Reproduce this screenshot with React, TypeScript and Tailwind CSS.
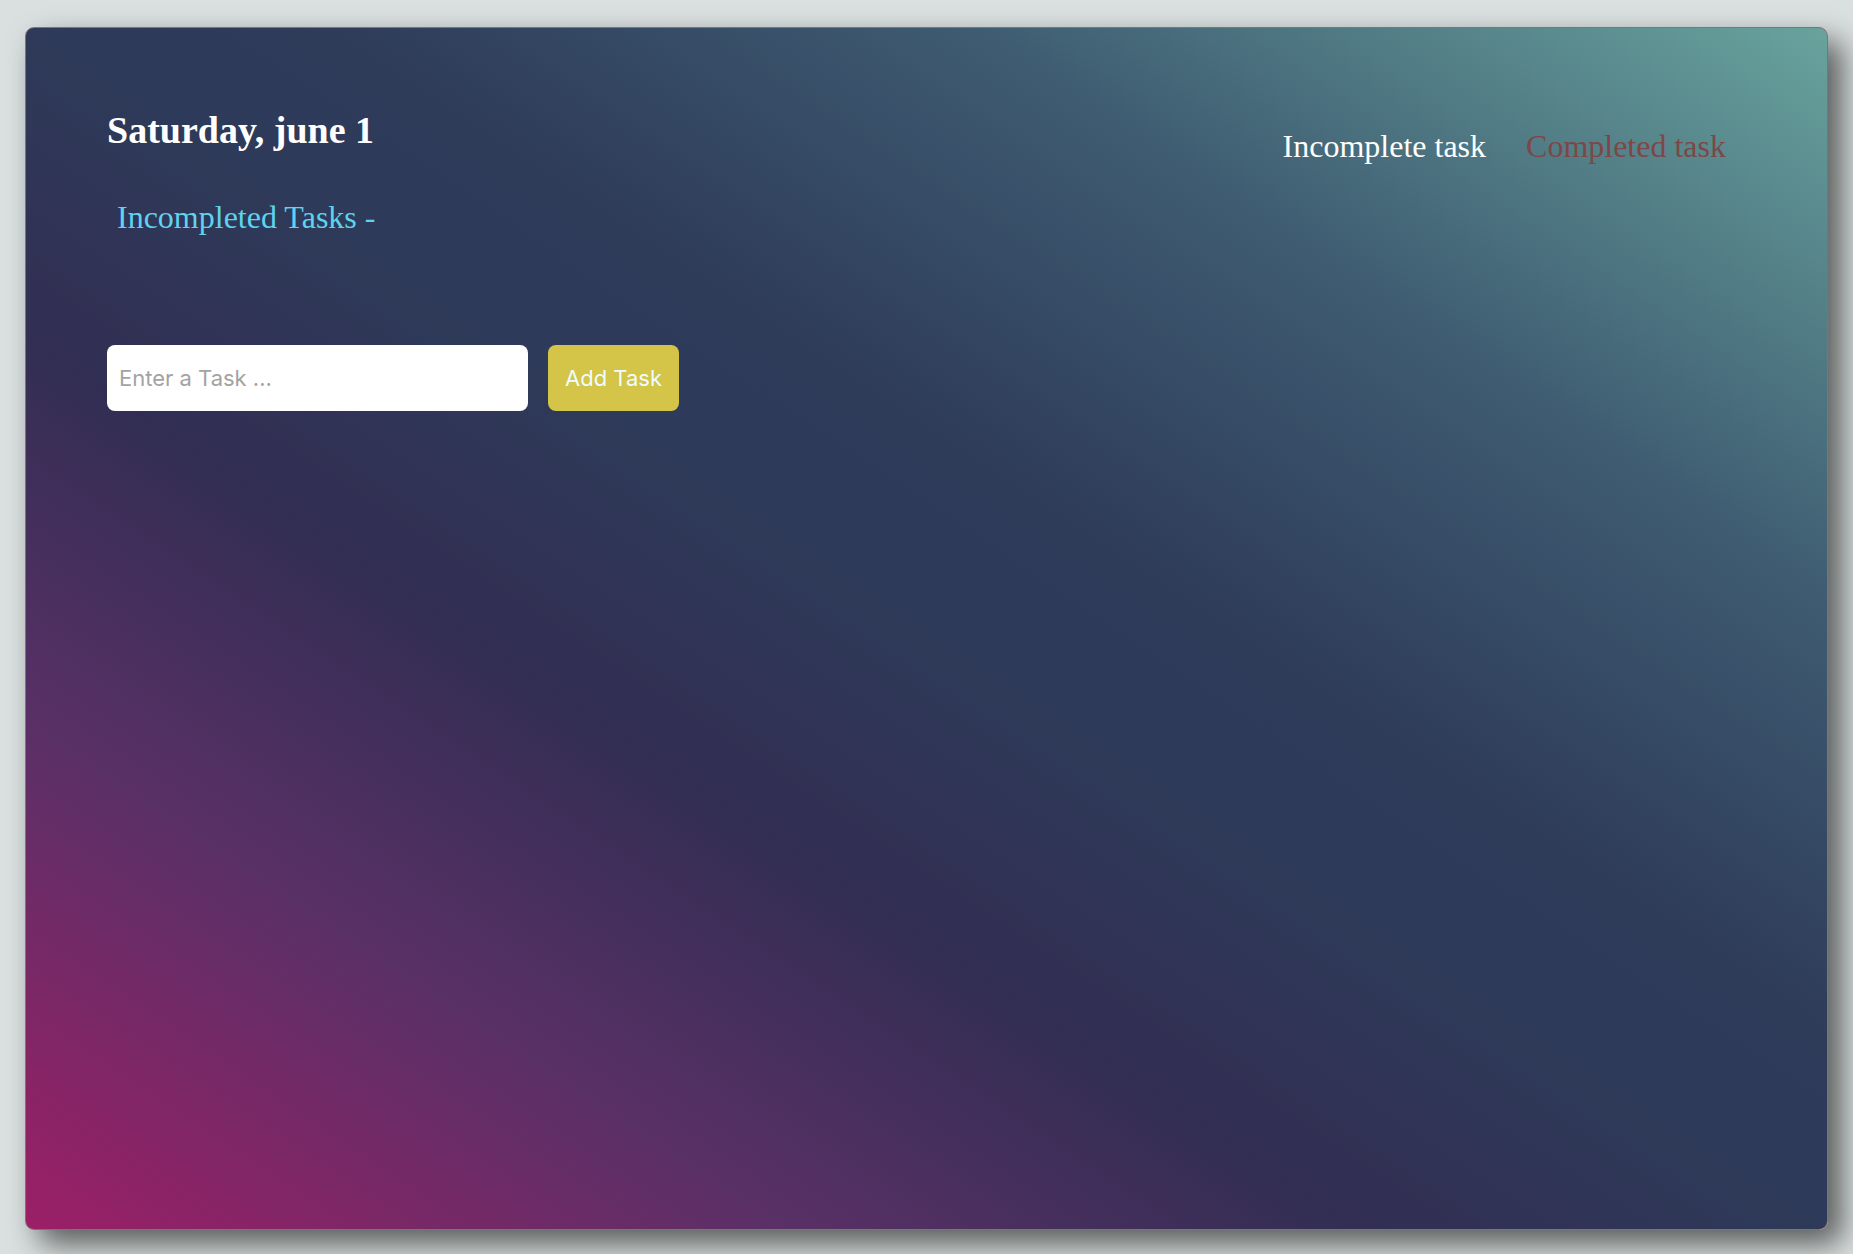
const serif = "font-['Liberation_Serif','Times_New_Roman',serif]";

const TodoBoard = () => {
  return (
    <div className="min-h-screen bg-[#d9e0df] px-[25px] pt-[27px]">
      <div
        className={`h-[1203px] rounded-[9px] border border-[#946a6a] bg-[linear-gradient(to_top_right,#9c1f66_0%,#5a3066_21%,#322e53_37%,#2e3a59_50%,#2e3b59_58%,#3e5b71_76%,#68a39d_100%)] pl-[81px] pt-[83px] shadow-[14px_14px_30px_rgba(0,0,0,0.6)] ${serif}`}
      >
        <div className="flex items-start justify-between">
          <div>
            <h1 className="text-[38px] font-bold leading-none text-white">
              Saturday, june 1
            </h1>
            <h2 className="ml-[10px] mt-[52px] text-[32px] leading-none text-[#5fd3ee]">
              Incompleted Tasks -
            </h2>
          </div>
          <nav className="mr-[101px] mt-[19px] flex gap-[40px] text-[32px] leading-none">
            <span className="text-white">Incomplete task</span>
            <span className="text-[#7e4747]">Completed task</span>
          </nav>
        </div>

        <div className="mt-[112px] flex gap-[20px] font-['Inter','Liberation_Sans',sans-serif]">
          <input
            type="text"
            placeholder="Enter a Task ..."
            className="h-[66px] w-[421px] rounded-lg bg-white pl-[12px] text-[22px] text-gray-800 outline-none placeholder:text-[#a3a3a3]"
          />
          <button className="h-[66px] w-[131px] rounded-lg bg-[#d4c447] text-[22px] text-[#eefcff]">
            Add Task
          </button>
        </div>
      </div>
    </div>
  );
};

export default function App() {
  return <TodoBoard />;
}
